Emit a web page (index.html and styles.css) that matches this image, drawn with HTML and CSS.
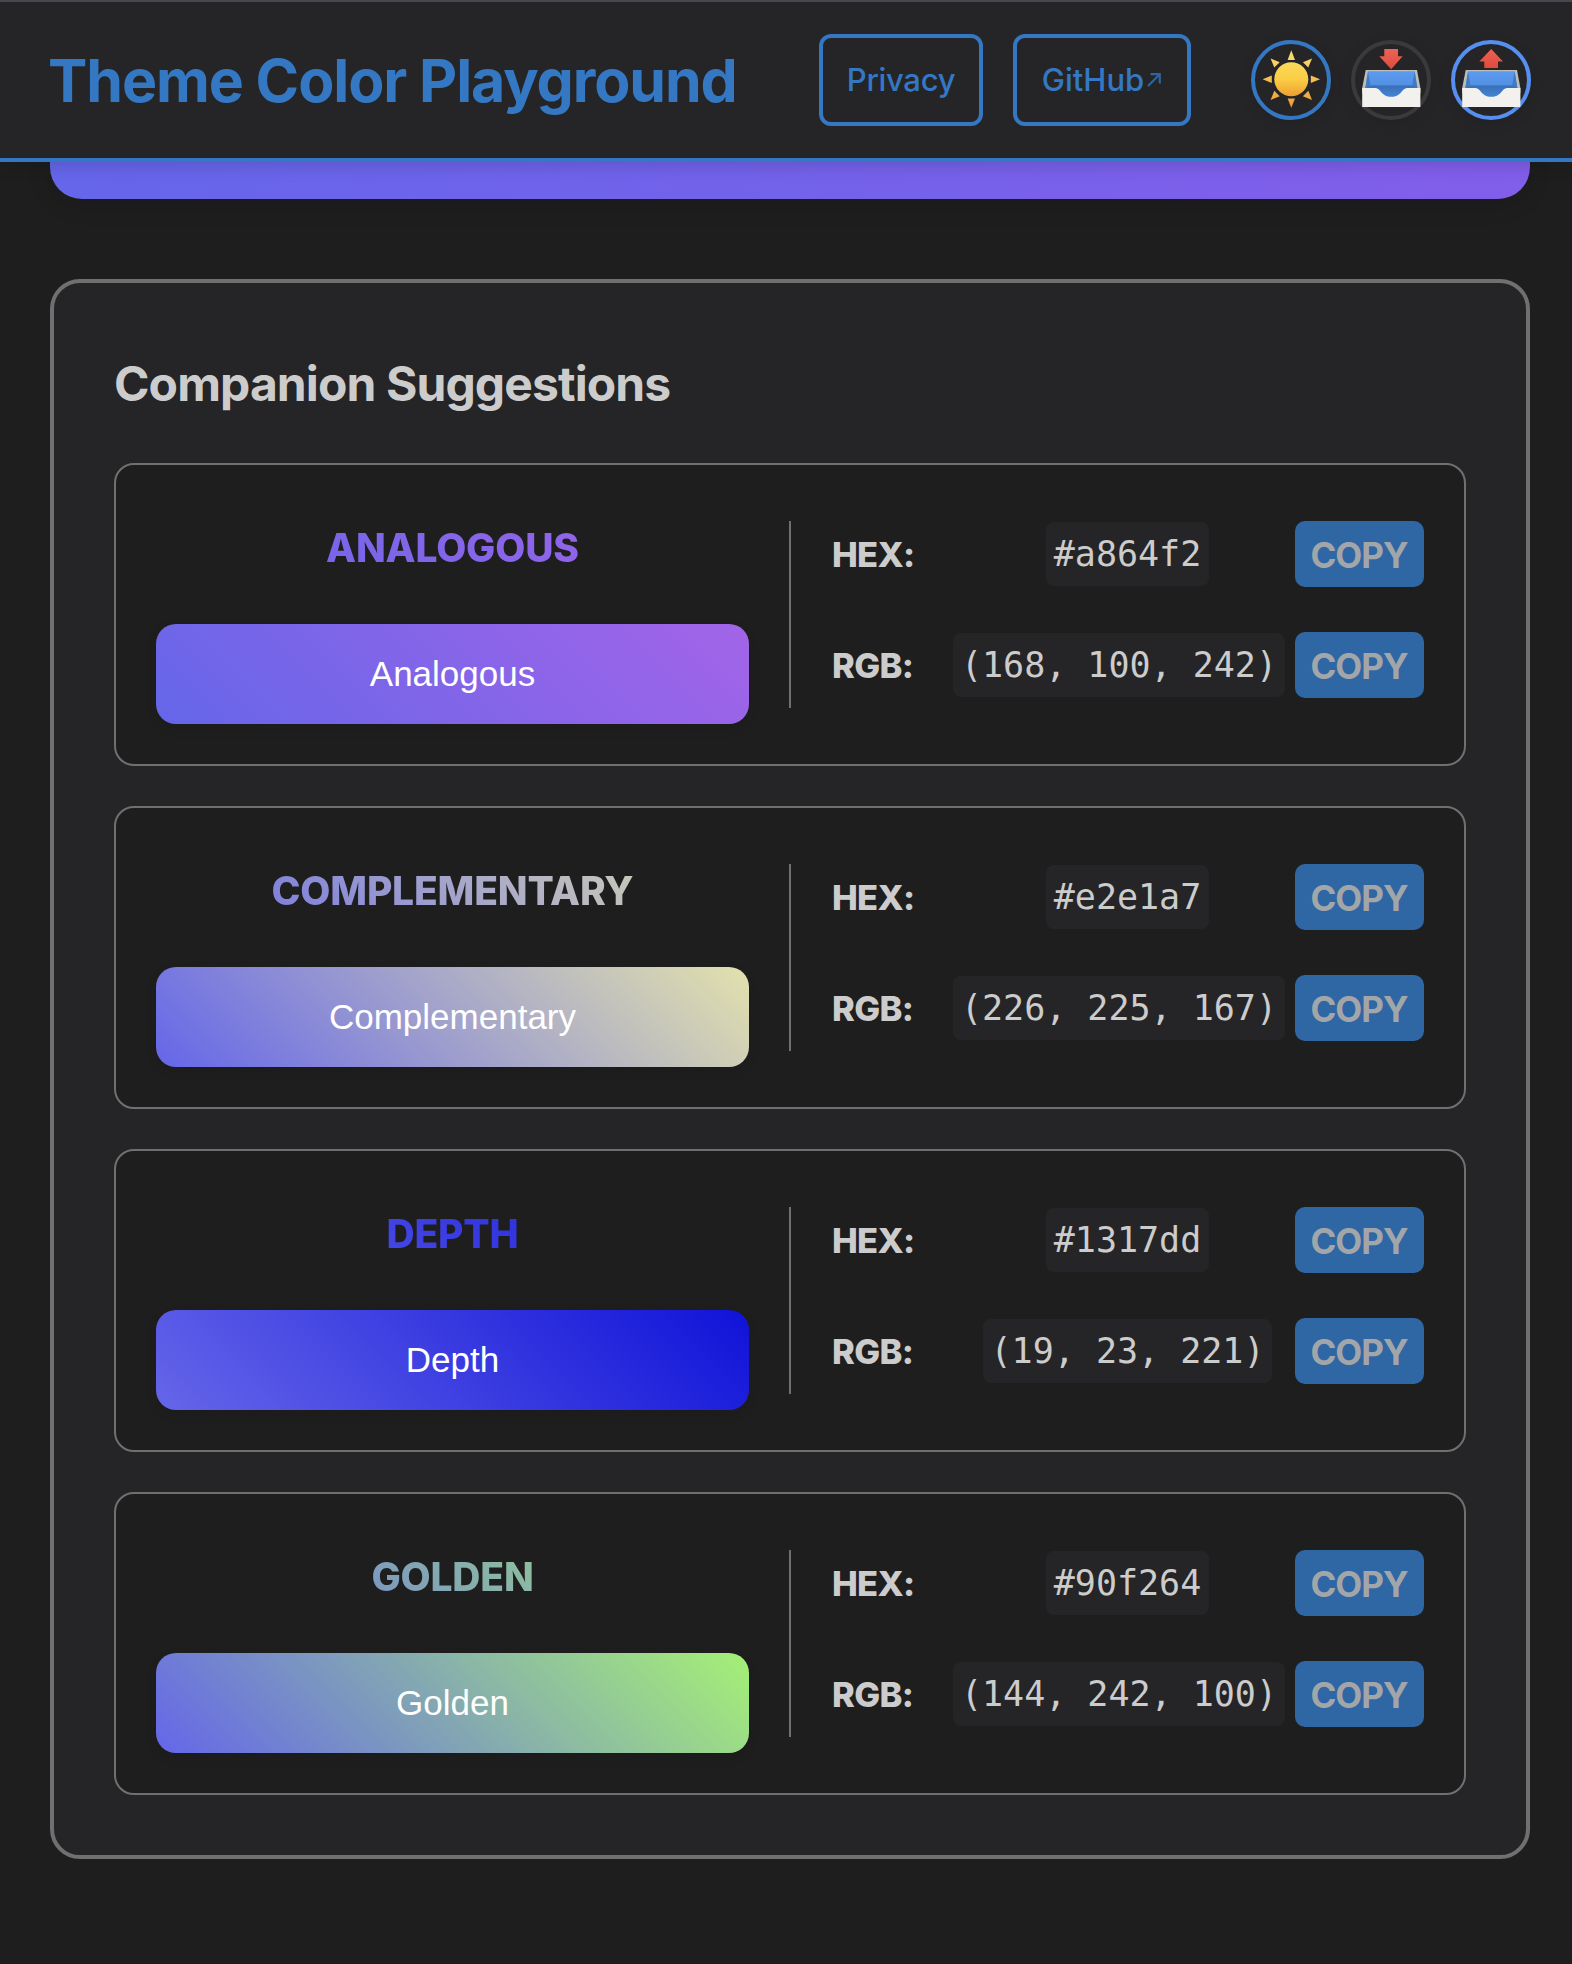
FILE: index.html
```html
<!DOCTYPE html>
<html lang="en">
<head>
<meta charset="utf-8">
<title>Theme Color Playground</title>
<link rel="stylesheet" href="styles.css">
</head>
<body>
<svg class="defs" width="0" height="0" aria-hidden="true">
  <defs>
    <linearGradient id="sun-disc" x1="0" y1="0" x2="0" y2="1"><stop offset="0" stop-color="#fbd95c"/><stop offset=".5" stop-color="#fbce44"/><stop offset="1" stop-color="#ee9f30"/></linearGradient>
    <linearGradient id="sun-rays" gradientUnits="userSpaceOnUse" x1="0" y1="2" x2="0" y2="60"><stop offset="0" stop-color="#fae070"/><stop offset="1" stop-color="#ee9c38"/></linearGradient>
    <linearGradient id="tray-in" gradientUnits="userSpaceOnUse" x1="0" y1="23" x2="0" y2="50"><stop offset="0" stop-color="#5c9bf0"/><stop offset=".5" stop-color="#5291e4"/><stop offset=".56" stop-color="#3a70b6"/><stop offset="1" stop-color="#4486dc"/></linearGradient>
    <linearGradient id="arrow-red" x1="0" y1="0" x2="0" y2="1"><stop offset="0" stop-color="#ea6356"/><stop offset="1" stop-color="#e04a3c"/></linearGradient>
    <g id="tray">
      <path d="M6.700 22H58L61.400 40V45H3.200V40Z" fill="#bdbdb8"/>
      <path d="M9 23.200H55.700L58.500 41V52H6.200V41Z" fill="url(#tray-in)"/>
      <path d="M9 23.200L11.300 37L6.200 41Z" fill="#4179c2"/>
      <path d="M55.700 23.200L53.300 37L58.500 41Z" fill="#4179c2"/>
      <path d="M3.200 40H16C22 40 22 48.800 32.300 48.800C42.600 48.800 42.600 40 48.600 40H61.400V59H3.200Z" fill="#f2f1ee"/>
    </g>
  </defs>
</svg>
<header class="header">
  <h1 class="title">Theme Color Playground</h1>
  <nav class="nav">
    <a class="nav-link privacy">Privacy</a>
    <a class="nav-link github">GitHub<svg class="external" width="14" height="14" viewBox="0 0 14 14"><path d="M1 13L12.500 1.500M3.500 1.200H12.800V10.500"/></svg></a>
  </nav>
  <div class="actions">
    <button class="round theme" aria-label="Toggle theme">
      <svg width="64" height="64" viewBox="0 0 64 64">
        <g fill="url(#sun-rays)">
          <path d="M32.300 2.300L36 12H28.600Z"/><path d="M32.300 59.700L36 50.500H28.600Z"/>
          <path d="M3.600 31.200L12.800 27.500V34.900Z"/><path d="M61 31.200L51.800 27.500V34.900Z"/>
          <path d="M11.600 10.500L20.700 14.200L15.300 19.600Z"/><path d="M53 10.500L43.900 14.200L49.300 19.600Z"/>
          <path d="M11.600 51.900L20.700 48.200L15.300 42.800Z"/><path d="M53 51.900L43.900 48.200L49.300 42.800Z"/>
        </g>
        <circle cx="32.300" cy="31.200" r="17" fill="url(#sun-disc)"/>
      </svg>
    </button>
    <button class="round import" aria-label="Import">
      <svg width="64" height="64" viewBox="0 0 64 64"><use href="#tray"/><path d="M25.300 1H39V8.200H43.700L32.200 21.300L20.300 8.200H25.300Z" fill="url(#arrow-red)"/></svg>
    </button>
    <button class="round export" aria-label="Export">
      <svg width="64" height="64" viewBox="0 0 64 64"><use href="#tray"/><path d="M25.300 20V13.600H20.300L32.200 1L44 13.600H39V20Z" fill="url(#arrow-red)"/></svg>
    </button>
  </div>
</header>
<main class="main">
  <div class="banner"></div>
  <section class="panel">
    <h2 class="panel-title">Companion Suggestions</h2>
    <div class="cards">
      <article class="card analogous">
        <div class="preview"><h3 class="name">ANALOGOUS</h3><button class="swatch">Analogous</button></div>
        <div class="values">
          <div class="row"><span class="label">HEX:</span><span class="cell"><code class="chip">#a864f2</code></span><button class="copy">COPY</button></div>
          <div class="row"><span class="label">RGB:</span><span class="cell"><code class="chip">(168, 100, 242)</code></span><button class="copy">COPY</button></div>
        </div>
      </article>
      <article class="card complementary">
        <div class="preview"><h3 class="name">COMPLEMENTARY</h3><button class="swatch">Complementary</button></div>
        <div class="values">
          <div class="row"><span class="label">HEX:</span><span class="cell"><code class="chip">#e2e1a7</code></span><button class="copy">COPY</button></div>
          <div class="row"><span class="label">RGB:</span><span class="cell"><code class="chip">(226, 225, 167)</code></span><button class="copy">COPY</button></div>
        </div>
      </article>
      <article class="card depth">
        <div class="preview"><h3 class="name">DEPTH</h3><button class="swatch">Depth</button></div>
        <div class="values">
          <div class="row"><span class="label">HEX:</span><span class="cell"><code class="chip">#1317dd</code></span><button class="copy">COPY</button></div>
          <div class="row"><span class="label">RGB:</span><span class="cell"><code class="chip">(19, 23, 221)</code></span><button class="copy">COPY</button></div>
        </div>
      </article>
      <article class="card golden">
        <div class="preview"><h3 class="name">GOLDEN</h3><button class="swatch">Golden</button></div>
        <div class="values">
          <div class="row"><span class="label">HEX:</span><span class="cell"><code class="chip">#90f264</code></span><button class="copy">COPY</button></div>
          <div class="row"><span class="label">RGB:</span><span class="cell"><code class="chip">(144, 242, 100)</code></span><button class="copy">COPY</button></div>
        </div>
      </article>
    </div>
  </section>
</main>
</body>
</html>
```
FILE: styles.css
```css
* { box-sizing: border-box; margin: 0; padding: 0; }

:root {
  --bg: #1e1e1e;
  --surface: #252527;
  --border: #707070;
  --text: #cccccc;
  --accent: #3478c4;
  --base: #6566e9;
}

body {
  background: var(--bg);
  color: var(--text);
  font-family: Inter, "Liberation Sans", sans-serif;
  min-height: 1964px;
}

button { border: 0; font-family: inherit; }
.defs { display: block; }

.header {
  position: relative;
  z-index: 1;
  display: flex;
  align-items: center;
  height: 162px;
  padding: 0 41px 0 48px;
  background: var(--surface);
  border-top: 2px solid #48464f;
  border-bottom: 4px solid var(--accent);
  box-shadow: 0 4px 16px rgba(0, 0, 0, .15);
}

.title {
  padding-top: 2px;
  color: var(--accent);
  font-size: 59px;
  font-weight: 700;
  letter-spacing: -1.1px;
  line-height: 80px;
  white-space: nowrap;
}

.nav { display: flex; gap: 30px; margin-left: auto; }

.nav-link {
  display: flex;
  align-items: center;
  justify-content: center;
  height: 92px;
  padding-bottom: 1px;
  border: 4px solid var(--accent);
  border-radius: 12px;
  color: var(--accent);
  font-size: 31px;
  font-weight: 500;
}

.privacy { width: 164px; letter-spacing: -.3px; }
.github { width: 178px; padding-right: 1px; }

.external {
  margin: 0 0 0 3px;
  fill: none;
  stroke: var(--accent);
  stroke-width: 2.200;
  opacity: .75;
}

.actions { display: flex; gap: 20px; margin-left: 60px; }

.round {
  display: grid;
  place-items: center;
  width: 80px;
  height: 80px;
  border: 4px solid var(--accent);
  border-radius: 50%;
  background: transparent;
  box-shadow: 0 4px 16px rgba(0, 0, 0, .08);
}

.round svg { display: block; }
.import { border-color: #3a3a3c; }
.export { border-color: #568ff0; }

.main { padding: 0 42px 0 50px; }

.banner {
  height: 37px;
  border-radius: 0 0 32px 32px;
  background: linear-gradient(90deg, #6566ea, #825eea);
  box-shadow: 0 4px 24px rgba(0, 0, 0, .15);
}

.panel {
  margin-top: 80px;
  padding: 60px;
  border: 4px solid var(--border);
  border-radius: 30px;
  background: var(--surface);
}

.panel-title {
  margin-bottom: 39px;
  font-size: 48px;
  font-weight: 700;
  letter-spacing: -.9px;
  line-height: 81px;
}

.cards { display: grid; gap: 40px; }

.card {
  display: grid;
  grid-template-columns: 593px 635px;
  gap: 40px;
  align-items: center;
  height: 303px;
  padding: 40px;
  border: 2px solid var(--border);
  border-radius: 20px;
  background: var(--bg);
}

.analogous { --tone: #a364e8; }
.complementary { --tone: #e2e1ad; }
.depth { --tone: #1013d8; }
.golden { --tone: #a5f076; }

.preview { display: grid; gap: 33px; }

.name {
  background: linear-gradient(45deg, var(--base), var(--tone));
  -webkit-background-clip: text;
  background-clip: text;
  color: transparent;
  font-size: 39px;
  font-weight: 800;
  letter-spacing: -.2px;
  line-height: 86px;
  text-align: center;
}

.swatch {
  height: 100px;
  border-radius: 20px;
  background: linear-gradient(45deg, var(--base), var(--tone));
  box-shadow: 0 4px 12px rgba(0, 0, 0, .1);
  color: #fff;
  font: 35px "Liberation Sans", sans-serif;
}

.values {
  display: grid;
  gap: 45px;
  height: 187px;
  padding-left: 40px;
  border-left: 2px solid var(--border);
  align-content: start;
}

.row {
  display: grid;
  grid-template-columns: 139px 315px 129px;
  align-items: center;
  justify-content: start;
  height: 66px;
}

.label {
  padding: 1px 0 0 1px;
  font-size: 34.500px;
  font-weight: 800;
  letter-spacing: -.7px;
}

/* Wide values spill towards the label and keep their distance from the button. */
.cell { display: flex; justify-content: flex-end; }

.chip {
  flex: none;
  height: 64px;
  margin: 0 auto;
  padding: 0 8px;
  border-radius: 8px;
  background: var(--surface);
  font: 35px/64px "DejaVu Sans Mono", monospace;
  white-space: nowrap;
}

.copy {
  width: 129px;
  height: 66px;
  margin-left: 10px;
  padding: 1px 1px 0 0;
  border-radius: 10px;
  background: #2f66a4;
  color: #a3a6a9;
  font-size: 35px;
  font-weight: 700;
  letter-spacing: -1px;
}
```
